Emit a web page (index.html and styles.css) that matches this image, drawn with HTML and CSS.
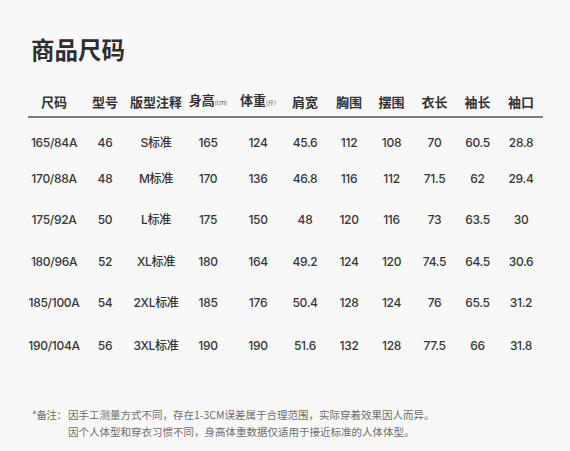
FILE: index.html
```html
<!DOCTYPE html>
<html lang="zh">
<head>
<meta charset="utf-8">
<link rel="stylesheet" href="styles.css">
</head>
<body>
<div class="page">
  <h1 class="title">商品尺码</h1>
  <div class="table">
    <div class="row head">
      <div>尺码</div><div>型号</div><div>版型注释</div><div>身高<small>(cm)</small></div><div>体重<small>(斤)</small></div><div>肩宽</div><div>胸围</div><div>摆围</div><div>衣长</div><div>袖长</div><div>袖口</div>
    </div>
    <div class="row">
      <div>165/84A</div><div>46</div><div>S标准</div><div>165</div><div>124</div><div>45.6</div><div>112</div><div>108</div><div>70</div><div>60.5</div><div>28.8</div>
    </div>
    <div class="row">
      <div>170/88A</div><div>48</div><div>M标准</div><div>170</div><div>136</div><div>46.8</div><div>116</div><div>112</div><div>71.5</div><div>62</div><div>29.4</div>
    </div>
    <div class="row">
      <div>175/92A</div><div>50</div><div>L标准</div><div>175</div><div>150</div><div>48</div><div>120</div><div>116</div><div>73</div><div>63.5</div><div>30</div>
    </div>
    <div class="row">
      <div>180/96A</div><div>52</div><div>XL标准</div><div>180</div><div>164</div><div>49.2</div><div>124</div><div>120</div><div>74.5</div><div>64.5</div><div>30.6</div>
    </div>
    <div class="row">
      <div>185/100A</div><div>54</div><div>2XL标准</div><div>185</div><div>176</div><div>50.4</div><div>128</div><div>124</div><div>76</div><div>65.5</div><div>31.2</div>
    </div>
    <div class="row">
      <div>190/104A</div><div>56</div><div>3XL标准</div><div>190</div><div>190</div><div>51.6</div><div>132</div><div>128</div><div>77.5</div><div>66</div><div>31.8</div>
    </div>
  </div>
  <div class="note">
    <span class="label">*备注：</span>
    <div class="lines">
      <p>因手工测量方式不同，存在1-3CM误差属于合理范围，实际穿着效果因人而异。</p>
      <p>因个人体型和穿衣习惯不同，身高体重数据仅适用于接近标准的人体体型。</p>
    </div>
  </div>
</div>
</body>
</html>
```
FILE: styles.css
```css
html, body {
  margin: 0;
  padding: 0;
  background: #f8f8f8;
}
.page {
  width: 570px;
  height: 451px;
  padding: 34px 0 0 28px;
  box-sizing: border-box;
  font-family: Inter, "Noto Sans CJK SC", sans-serif;
  color: #363636;
}
.title {
  margin: 0 0 0 3px;
  font-family: "Noto Sans CJK SC", sans-serif;
  font-size: 23.5px;
  line-height: 30px;
  font-weight: 700;
  color: #2e2e2e;
}
.table {
  width: 515px;
  margin-top: 26px;
  display: flex;
  flex-direction: column;
}
.row {
  display: grid;
  grid-template-columns: 52px 50px 52px 52px 48px 46px 42px 43px 43px 43px 44px;
  height: 20px;
  align-items: center;
  font-size: 12px;
  font-weight: 500;
  letter-spacing: -0.3px;
  white-space: nowrap;
}
.row > div {
  text-align: center;
  line-height: 20px;
}
.row.head {
  font-family: "Noto Sans CJK SC", sans-serif;
  font-size: 13px;
  font-weight: 700;
  letter-spacing: 0;
  color: #333;
  padding-bottom: 6px;
  border-bottom: 2px solid #7d7d7d;
  box-sizing: content-box;
}
.row.head small {
  font-size: 6px;
  font-weight: 400;
  color: #555;
}
.row:nth-child(2) { margin-top: 15px; }
.row:nth-child(3) { margin-top: 16px; }
.row:nth-child(4) { margin-top: 21px; }
.row:nth-child(5) { margin-top: 22px; }
.row:nth-child(6) { margin-top: 21px; }
.row:nth-child(7) { margin-top: 23px; }
.note {
  display: flex;
  margin-top: 50px;
  margin-left: 4px;
  font-family: "Noto Sans CJK SC", sans-serif;
  font-size: 10.5px;
  color: #6e6e6e;
}
.note .label {
  flex: 0 0 36px;
  white-space: nowrap;
  line-height: 17px;
  letter-spacing: -0.5px;
}
.note p {
  margin: 0;
  line-height: 17px;
  white-space: nowrap;
}
```
